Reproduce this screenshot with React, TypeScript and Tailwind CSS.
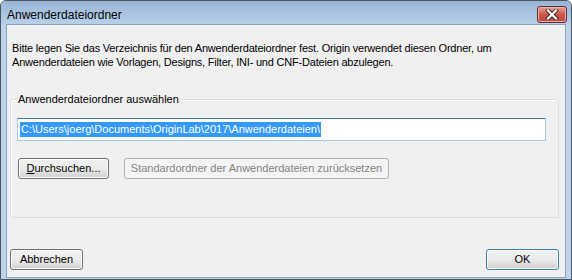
import React from "react";

const btn =
  "flex items-center justify-center rounded-[3px] border text-[11px] leading-none bg-gradient-to-b from-[#f2f2f2] via-[#ebebeb] to-[#cfcfcf] shadow-[inset_0_0_0_1px_#fcfcfc]";

export default function App() {
  return (
    <div className="w-[572px] h-[280px] flex flex-col bg-[#bed4ea] border border-[#4a5561] rounded-t-[6px] overflow-hidden font-['Liberation_Sans',Arial,sans-serif] text-black">
      <div className="h-[23px] flex items-start justify-between pl-[6px] pr-[4px] bg-gradient-to-b from-[#99b4d3] to-[#b8d0ea]">
        <span className="text-[12px] leading-[15px] mt-[7px]">Anwenderdateiordner</span>
        <div className="mt-[5px] w-[30px] h-[17px] rounded-[3px] border border-[#5b2a2a] bg-gradient-to-b from-[#e6a597] via-[#c9574a] to-[#c2453a] flex items-center justify-center shadow-[inset_0_0_0_1px_#eab4a8]">
          <svg width="14" height="11" viewBox="0 0 14 11">
            <path d="M3 1.5 L11 9.5 M11 1.5 L3 9.5" stroke="#3a2a2a" strokeWidth="4" strokeLinecap="square" />
            <path d="M3 1.5 L11 9.5 M11 1.5 L3 9.5" stroke="#ffffff" strokeWidth="2.2" strokeLinecap="square" />
          </svg>
        </div>
      </div>
      <div className="flex-1 mx-[5px] border border-[#8ba3bd] bg-[#f0f0f0] flex flex-col">
        <p className="ml-[5px] mt-[16px] text-[11px] leading-[14px] tracking-[-0.2px]">
          Bitte legen Sie das Verzeichnis für den Anwenderdateiordner fest. Origin verwendet diesen Ordner, um
          <br />
          Anwenderdateien wie Vorlagen, Designs, Filter, INI- und CNF-Dateien abzulegen.
        </p>
        <div className="relative ml-[3px] mt-[30px] w-[549px] h-[119px] border border-[#d5dfe5] rounded-[3px] shadow-[inset_1px_1px_0_#ffffff] flex flex-col pl-[6px] pt-[18px]">
          <span className="absolute -top-[8px] left-[6px] px-[1px] bg-[#f0f0f0] text-[11px] leading-[14px]">
            Anwenderdateiordner auswählen
          </span>
          <div className="w-[529px] h-[23px] bg-white border border-[#a5c9e4] border-t-[#3d7bad] flex items-center pl-[2px]">
            <span className="bg-[#3399ff] text-white text-[11px] leading-[15px] px-[1px]">
              C:\Users\joerg\Documents\OriginLab\2017\Anwenderdateien\
            </span>
          </div>
          <div className="flex mt-[17px] ml-[1px] gap-[15px]">
            <button className={`${btn} w-[91px] h-[21px] border-[#707070]`}>
              <span>
                <span className="underline">D</span>urchsuchen...
              </span>
            </button>
            <div className="w-[265px] h-[21px] rounded-[3px] border border-[#adb2b5] bg-[#f4f4f4] text-[#838383] text-[11px] flex items-center justify-center">
              Standardordner der Anwenderdateien zurücksetzen
            </div>
          </div>
        </div>
        <div className="flex justify-between ml-[3px] mr-[6px] mt-[31px]">
          <button className={`${btn} w-[73px] h-[21px] border-[#707070]`}>Abbrechen</button>
          <button className={`${btn} w-[73px] h-[21px] border-[#3c7fb1] shadow-[inset_0_0_0_1px_#48d7f7,inset_0_0_0_2px_#c4ecfb]`}>OK</button>
        </div>
      </div>
      <div className="h-[1px]" />
    </div>
  );
}
